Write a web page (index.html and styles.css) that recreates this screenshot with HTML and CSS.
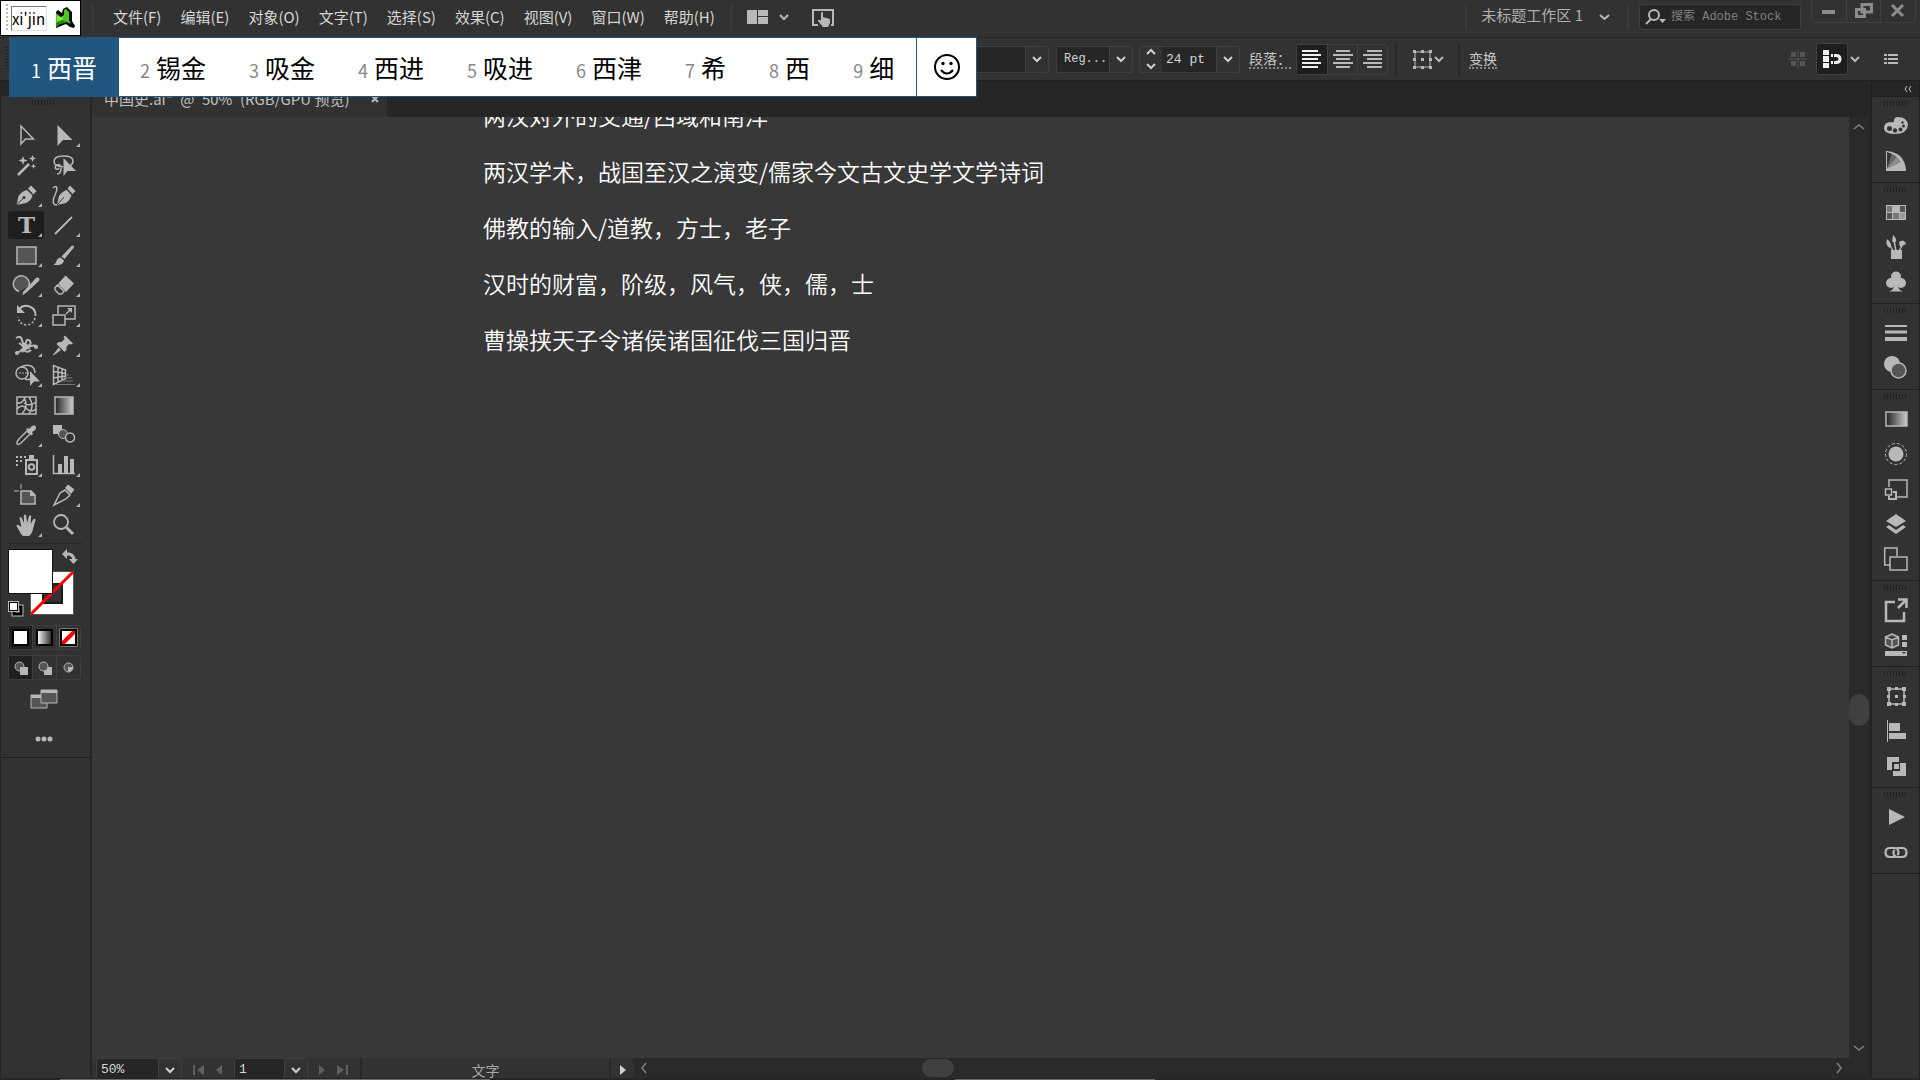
FILE: index.html
```html
<!DOCTYPE html>
<html lang="zh-CN">
<head>
    <meta charset="UTF-8">
    <meta name="viewport" content="width=device-width, initial-scale=1.0">
    <title>中国史.ai</title>
    <link rel="stylesheet" href="styles.css">
</head>
<body>
    <!-- menu bar -->
    <header class="menubar">
        <nav class="menus">
            <button>文件(F)</button>
            <button>编辑(E)</button>
            <button>对象(O)</button>
            <button>文字(T)</button>
            <button>选择(S)</button>
            <button>效果(C)</button>
            <button>视图(V)</button>
            <button>窗口(W)</button>
            <button>帮助(H)</button>
        </nav>
        <div class="menu-extra">
            <button class="arrange" aria-label="排列文档">
                <svg width="21" height="14" viewBox="0 0 21 14"><path class="f" d="M0 0h10v14H0zM11 0h10v6H11zM11 7h10v7H11z"/></svg>
                <svg width="10" height="6" viewBox="0 0 10 6"><path stroke-width="2" d="M1 1l4 4 4-4"/></svg>
            </button>
            <button class="touch" aria-label="触控工作区">
                <svg width="24" height="20" viewBox="0 0 24 20"><path stroke-width="2" d="M7 17H2V2h20v15h-2"/><path class="f" d="M10 4.500q1.200-1 2 0V9l7 2v4l-2 4h-5l-5-6q0-2 3-.5z"/></svg>
            </button>
        </div>
        <div class="menu-right">
            <button class="workspace">未标题工作区 1
                <svg width="11" height="7" viewBox="0 0 11 7"><path stroke-width="2" d="M1 1l4.500 4L10 1"/></svg>
            </button>
            <label class="search">
                <svg width="22" height="16" viewBox="0 0 22 16"><circle cx="9" cy="6" r="5" stroke-width="2"/><path stroke-width="2" d="M6 10l-5 5"/><path class="f" d="M14 10h7l-3.500 4z"/></svg>
                <input type="text" placeholder="搜索 Adobe Stock" aria-label="搜索">
            </label>
            <div class="window-buttons">
                <button aria-label="最小化"><svg width="14" height="14" viewBox="0 0 14 14"><path class="f" d="M0 6h13v4H0z"/></svg></button>
                <button aria-label="还原"><svg width="18" height="16" viewBox="0 0 18 16"><path stroke-width="3" d="M7 1.500h9.500V9H7zM1.500 6.500h8v7h-8z"/></svg></button>
                <button aria-label="关闭"><svg width="14" height="14" viewBox="0 0 14 14"><path stroke-width="3" d="M1 1l11 11M12 1L1 12"/></svg></button>
            </div>
        </div>
    </header>

    <!-- control bar -->
    <div class="controlbar">
        <span class="grip-v"></span>
        <div class="controls">
            <div class="combo font-name">
                <input type="text" aria-label="字体">
                <button aria-label="字体列表"><svg width="10" height="6" viewBox="0 0 10 6"><path stroke-width="2" d="M1 1l4 4 4-4"/></svg></button>
            </div>
            <div class="combo font-style">
                <input type="text" value="Reg..." aria-label="字体样式">
                <button aria-label="样式列表"><svg width="10" height="6" viewBox="0 0 10 6"><path stroke-width="2" d="M1 1l4 4 4-4"/></svg></button>
            </div>
            <div class="combo font-size">
                <button aria-label="调整字号"><svg width="10" height="20" viewBox="0 0 10 20"><path stroke-width="2" d="M1 5l4-4 4 4M1 15l4 4 4-4"/></svg></button>
                <input type="text" value="24 pt" aria-label="字号">
                <button aria-label="字号列表"><svg width="10" height="6" viewBox="0 0 10 6"><path stroke-width="2" d="M1 1l4 4 4-4"/></svg></button>
            </div>
            <a href="#" class="panel-link">段落：</a>
            <div class="align">
                <button class="on" aria-label="左对齐"><svg width="20" height="18" viewBox="0 0 20 18"><path stroke-width="2" d="M0 1h16M0 5h19M0 9h16M0 13h19M0 17h16"/></svg></button>
                <button aria-label="居中对齐"><svg width="20" height="18" viewBox="0 0 20 18"><path stroke-width="2" d="M3 1h14M0 5h20M3 9h14M0 13h20M3 17h14"/></svg></button>
                <button aria-label="右对齐"><svg width="20" height="18" viewBox="0 0 20 18"><path stroke-width="2" d="M4 1h15M0 5h19M4 9h15M0 13h19M4 17h15"/></svg></button>
            </div>
            <span class="divider"></span>
            <button class="reference" aria-label="对齐选项">
                <svg width="19" height="19" viewBox="0 0 19 19"><path d="M2 2h15v15H2z"/><path class="f" d="M0 0h3v3H0zM8 0h3v3H8zM16 0h3v3h-3zM0 8h3v3H0zM16 8h3v3h-3zM0 16h3v3H0zM8 16h3v3H8zM16 16h3v3h-3zM8 8h3v3H8z"/></svg>
                <svg width="10" height="6" viewBox="0 0 10 6"><path stroke-width="2" d="M1 1l4 4 4-4"/></svg>
            </button>
            <span class="divider"></span>
            <a href="#" class="panel-link">变换</a>
        </div>
        <div class="controls-right">
            <button class="dim" aria-label="对齐像素网格"><svg width="18" height="18" viewBox="0 0 18 18"><path d="M9 0v18M0 9h18"/><path class="f" d="M2 2h5v5H2zM11 2h5v5h-5zM2 11h5v5H2zM11 11h5v5h-5z"/></svg></button>
            <button class="snap" aria-label="贴紧像素"><svg width="20" height="18" viewBox="0 0 20 18"><path class="f" d="M1 0h6v18H1z"/><path class="cut" d="M1 5.500h6M1 12.500h6"/><path stroke-width="3" d="M9 5.500h5q4 0 4 3.500t-4 3.500H9"/><path class="cut" d="M11.500 3v12"/></svg></button>
            <button aria-label="更多对齐"><svg width="10" height="6" viewBox="0 0 10 6"><path stroke-width="2" d="M1 1l4 4 4-4"/></svg></button>
            <button class="list" aria-label="面板菜单"><svg width="14" height="12" viewBox="0 0 14 12"><path stroke-width="2" d="M0 2h3M4 2h10M0 6h3M4 6h10M0 10h3M4 10h10"/></svg></button>
        </div>
    </div>

    <main class="workspace-area">
        <!-- tools -->
        <aside class="toolbox">
            <span class="grip"></span>
            <div class="tools">
                <button aria-label="选择工具"><svg viewBox="0 0 24 24"><path stroke-width="1.500" d="M7 3v18l4.500-5h8z"/></svg></button>
                <button class="more" aria-label="直接选择工具"><svg viewBox="0 0 24 24"><path class="f" d="M5.500 2v21l5.500-6h9.500z"/></svg></button>
                <button aria-label="魔棒工具"><svg viewBox="0 0 24 24"><path stroke-width="2.500" d="M4 22L15 11"/><path class="f" d="M9 3l1.200 3.300L13.500 7.500l-3.300 1.200L9 12 7.800 8.700 4.500 7.500l3.300-1.200zM18.500 2l1 2.500L22 5.500l-2.500 1-1 2.500-1-2.500-2.500-1 2.500-1zM19.500 10.500l.8 1.900 2 .8-2 .8-.8 2-.8-2-2-.8 2-.8z"/></svg></button>
                <button aria-label="套索工具"><svg viewBox="0 0 24 24"><path stroke-width="1.500" d="M11 14Q2 13 2 8.500 2 3 11.500 3 21 3 21 8q0 3-3 5"/><path stroke-width="1.500" d="M9 14q-1-3-4-2-3 2-1 4 2 1 3-1M5 21q4 0 4-6"/><path class="f" d="M11.500 5v18l4-5H24z"/></svg></button>
                <button class="more" aria-label="钢笔工具"><svg viewBox="0 0 24 24"><path class="f" d="M2.500 22l2-9Q8 8 13 7l5.500 5.500Q17 18 12 20zM14 5.500L17 2.500l5.500 5.500-3 3.500z"/><path class="cut" d="M2.500 22l7-7"/><circle class="cutf" cx="10" cy="14.500" r="1.500"/></svg></button>
                <button aria-label="曲率工具"><svg viewBox="0 0 24 24"><path stroke-width="1.500" d="M1 5q3-3 4 0 0 3-2 7-3 6-1 9 2 2 4 0"/><path class="f" d="M5 22l2-9q3.500-5 8-6l4.500 5.500Q18 17 14 20zM15.500 5.500L18 2.500l5.500 5.500-3 3z"/><path class="cut" d="M5 22l7-8"/></svg></button>
                <button class="more on" aria-label="文字工具"><svg viewBox="0 0 24 24"><text x="12.500" y="20" text-anchor="middle">T</text></svg></button>
                <button class="more" aria-label="直线段工具"><svg viewBox="0 0 24 24"><path stroke-width="1.800" d="M3 21L20 4"/></svg></button>
                <button class="more" aria-label="矩形工具"><svg viewBox="0 0 24 24"><path class="mid" stroke-width="1.500" d="M3 4h19v17H3z"/></svg></button>
                <button class="more" aria-label="画笔工具"><svg viewBox="0 0 24 24"><path class="f" d="M21.500 2.500q1 1 0 2.500l-9 11-3-2.500 10-10.500zM8.500 14.500l3.500 3q-1 4-5 4.500H1.500q2.500-1.500 3-4t4-3.500z"/></svg></button>
                <button class="more" aria-label="Shaper 工具"><svg viewBox="0 0 24 24"><path class="mid" stroke-width="1.500" d="M5 18.500A8 8 0 1 1 15 13"/><path class="f" d="M22 5q2-1 3 0t0 3L13 19l-4 3q-1 0 0-3z"/></svg></button>
                <button class="more" aria-label="橡皮擦工具"><svg viewBox="0 0 24 24"><path class="f" d="M13.500 2.500l8.500 8-8 8.500-8-8z"/><path stroke-width="1.500" d="M5.500 12l6.500 6.500-2.500 2.500H7l-4-4v-2.500z"/></svg></button>
                <button class="more" aria-label="旋转工具"><svg viewBox="0 0 24 24"><path stroke-width="2" d="M5 6q4-4 9-3 8 2 7.500 10"/><path stroke-width="1.500" stroke-dasharray="2 2" d="M21 15q-2 7-9 7-7-1-8-8"/><path class="f" d="M3 2v8h8z"/></svg></button>
                <button class="more" aria-label="比例缩放工具"><svg viewBox="0 0 24 24"><path stroke-width="1.500" d="M6 11V3h17v13H13M1 12h12v10H1zM14 11l5-5"/><path class="f" d="M15 5h5v5z"/></svg></button>
                <button class="more" aria-label="宽度工具"><svg viewBox="0 0 24 24"><path stroke-width="2" d="M2 5q5-3 6 2 1 6 5 6 5-1 3-5-3-3-4 1-3 10-10 11M8 19q8-8 15-6M5 10q5 3 6 8 3 2 6-1"/><circle class="f" cx="3" cy="20" r="2"/><circle class="f" cx="22" cy="14" r="2"/><path class="f" d="M8 9l5 2 3 5-6 1z"/></svg></button>
                <button aria-label="操控变形工具" class="more"><svg viewBox="0 0 24 24"><path class="f" d="M13 2.500l8 8-2 1-2-.5-2.500 3 0 3-2 2-8-8 2-2h3l3-3-1-2zM6.500 14.500l2.500 2.500L1.500 22.500 1 22z"/></svg></button>
                <button class="more" aria-label="形状生成器工具"><svg viewBox="0 0 24 24"><circle stroke-width="1.500" cx="8" cy="10" r="6"/><path stroke-width="1.500" d="M7 4q5-3 10-1 4 2 4 7M11 16q3 1 6 0"/><path stroke-dasharray="2 1" d="M5 10h10"/><path class="f" d="M16 8v15l4-4.500h6z"/></svg></button>
                <button class="more" aria-label="透视网格工具"><svg viewBox="0 0 24 24"><path stroke-width="1.500" d="M1.500 2.500v19l12-6V7zM6 4v15M10 6v11M1.500 8.500l12 2M1.500 15l12-2"/><path class="soft" d="M14 12h3M13 15h7M9 18h12M4 21.500h19"/></svg></button>
                <button aria-label="网格工具"><svg viewBox="0 0 24 24"><path stroke-width="1.500" d="M3 4h19v17H3zM3 10q6 1 8-6M3 16q5-6 10 0 4 4 9 0M8 21q7-8 2-17M15 21q6-8 0-17M10 10q6 4 12-1"/></svg></button>
                <button aria-label="渐变工具"><svg viewBox="0 0 24 24"><defs><linearGradient id="fade"><stop stop-color="#222"/><stop offset="1" stop-color="#ccc"/></linearGradient></defs><path class="fade" stroke-width="1.500" d="M3 4h18v17H3z"/></svg></button>
                <button class="more" aria-label="吸管工具"><svg viewBox="0 0 24 24"><path stroke-width="1.500" d="M13 8l3 3-9 9q-4 3-4 0 0-2 2-4z"/><path class="f" d="M12 6l2-1 1 1 3-3q4-2 4 2 0 2-4 4l1 2-1.500 1.500z"/></svg></button>
                <button aria-label="混合工具"><svg viewBox="0 0 24 24"><path class="f" d="M1 2h9v9H1z"/><circle class="mid" cx="11" cy="11" r="4.500"/><circle class="hole" stroke-width="1.500" cx="18" cy="14.500" r="4.500"/></svg></button>
                <button class="more" aria-label="符号喷枪工具"><svg viewBox="0 0 24 24"><path class="f" d="M15 2h5v4h-5zM2 3h2v2H2zM6 3h2v2H6zM10 3h2v2h-2zM2 7h2v2H2zM6 7h2v2H6zM2 11h2v2H2z"/><path stroke-width="2" d="M12 7h11v14H12z"/><circle stroke-width="2" cx="17.500" cy="14" r="2.800"/></svg></button>
                <button class="more" aria-label="柱形图工具"><svg viewBox="0 0 24 24"><path stroke-width="1.500" d="M1.500 2v18.500H23"/><path class="f" d="M6 11h4v10H6zM12 3h4v18h-4zM18 6h4v15h-4z"/></svg></button>
                <button aria-label="画板工具"><svg viewBox="0 0 24 24"><path class="mid" stroke-width="1.500" d="M7 8h10l4 4v9H7z"/><path class="f" d="M16 7l6 6h-6z"/><path d="M0 8h5M7 1v5"/></svg></button>
                <button class="more" aria-label="切片工具"><svg viewBox="0 0 24 24"><path stroke-width="1.500" d="M2 22l6-12 5-3 5 5-4 4z"/><path class="f" d="M13 5l3-3.500 6.500 5L19 11z"/></svg></button>
                <button class="more" aria-label="抓手工具"><svg viewBox="0 0 24 24"><path class="f" d="M7 21L2.500 13q0-2 2-1l3 2L5.500 5q1-2 2.200 0L10 10 9.800 2.500q1.200-2 2.400 0L13 10l2-7q1.500-1.500 2.200 0L16.500 11l3-5q2-1 2 1L19 16q-1 5-4 7H9z"/></svg></button>
                <button aria-label="缩放工具"><svg viewBox="0 0 24 24"><circle stroke-width="1.800" cx="9" cy="9" r="7"/><path stroke-width="3" d="M14.500 14.500L21 21"/></svg></button>
            </div>
            <button class="fillstroke" aria-label="填色和描边">
                <svg width="75" height="70" viewBox="0 0 75 70">
                    <rect x="22.500" y="22.500" width="43" height="43" fill="#fff" stroke="#555"/>
                    <rect x="35" y="35" width="19" height="19" fill="#323232" stroke="#1a1a1a" stroke-width="2"/>
                    <path stroke="#f00" stroke-width="3" d="M23 65L65 23"/>
                    <rect x=".5" y=".5" width="44" height="44" fill="#fff" stroke="#111"/>
                    <path stroke-width="3" d="M58 5h3q5 1 5 7"/>
                    <path class="f" d="M59 0v10l-5-5zM61 10h9l-4.500 5z"/>
                    <rect x="6" y="58" width="7" height="7" stroke="#bbb" stroke-width="5"/>
                    <rect x="6" y="58" width="7" height="7" stroke="#000" stroke-width="3"/>
                    <rect x=".5" y="52.500" width="10" height="10" fill="#000" stroke="#bbb"/>
                    <rect x="2.500" y="54.500" width="6" height="6" fill="#fff" stroke="#fff"/>
                </svg>
            </button>
            <div class="modes">
                <button class="on" aria-label="颜色"><svg width="17" height="17" viewBox="0 0 17 17"><rect class="sw" fill="#fff" x="1" y="1" width="15" height="15"/></svg></button>
                <button aria-label="渐变"><svg width="17" height="17" viewBox="0 0 17 17"><defs><linearGradient id="paper"><stop stop-color="#fff"/><stop offset="1" stop-color="#2a2222"/></linearGradient></defs><rect class="sw" fill="url(#paper)" x="1" y="1" width="15" height="15"/></svg></button>
                <button aria-label="无"><svg width="17" height="17" viewBox="0 0 17 17"><rect fill="#fff" width="17" height="17"/><path stroke="#f00" stroke-width="4" d="M1 16L16 1"/><rect class="sw" x="1" y="1" width="15" height="15"/></svg></button>
            </div>
            <div class="modes">
                <button class="on" aria-label="正常绘图"><svg width="14" height="14" viewBox="0 0 14 14"><circle class="mid" cx="5.500" cy="5.500" r="4.500"/><path class="f" d="M6 6h8v8H6z"/></svg></button>
                <button aria-label="背面绘图"><svg width="14" height="14" viewBox="0 0 14 14"><path class="f" d="M6 6h8v8H6z"/><circle class="mid" cx="5.500" cy="5.500" r="4.500"/></svg></button>
                <button aria-label="内部绘图"><svg width="14" height="14" viewBox="0 0 14 14"><circle class="mid" cx="6.500" cy="6.500" r="4.500"/><path class="f" d="M6 6h5q0 4-5 5z"/></svg></button>
            </div>
            <button class="screen-mode" aria-label="更改屏幕模式"><svg width="28" height="20" viewBox="0 0 28 20"><path class="mid" d="M1 6h16v13H1z"/><path class="mid" d="M11 1h16v13H11z"/><path class="f" d="M11 1h16v3H11zM1 6h10v3H1z"/></svg></button>
            <button class="edit-tools" aria-label="编辑工具栏"><svg width="18" height="6" viewBox="0 0 18 6"><circle class="f" cx="3" cy="3" r="2.500"/><circle class="f" cx="9" cy="3" r="2.500"/><circle class="f" cx="15" cy="3" r="2.500"/></svg></button>
        </aside>

        <!-- document window -->
        <section class="document">
            <div class="tabs">
                <div class="tab">
                    <span class="tab-title">中国史.ai*&ensp;@&ensp;50%&ensp;(RGB/GPU 预览)</span>
                    <button aria-label="关闭文档"><svg width="8" height="8" viewBox="0 0 8 8"><path stroke-width="2" d="M1 1l6 6M7 1L1 7"/></svg></button>
                </div>
            </div>
            <div class="view">
                <article class="canvas">
                    <p>两汉对外的交通/西域和南洋</p>
                    <p>两汉学术，战国至汉之演变/儒家今文古文史学文学诗词</p>
                    <p>佛教的输入/道教，方士，老子</p>
                    <p>汉时的财富，阶级，风气，侠，儒，士</p>
                    <p>曹操挟天子令诸侯诸国征伐三国归晋</p>
                </article>
                <div class="scroll-v">
                    <button aria-label="向上滚动"><svg width="10" height="6" viewBox="0 0 10 6"><path stroke-width="1.500" d="M0 5l5-4 5 4"/></svg></button>
                    <span class="before"></span>
                    <span class="thumb"></span>
                    <span class="after"></span>
                    <button aria-label="向下滚动"><svg width="10" height="6" viewBox="0 0 10 6"><path stroke-width="1.500" d="M0 1l5 4 5-4"/></svg></button>
                </div>
            </div>
            <footer class="statusbar">
                <div class="combo zoom">
                    <input type="text" value="50%" aria-label="缩放">
                    <button aria-label="缩放列表"><svg width="10" height="6" viewBox="0 0 10 6"><path stroke-width="2" d="M1 1l4 4 4-4"/></svg></button>
                </div>
                <div class="pager">
                    <button aria-label="首项"><svg width="11" height="10" viewBox="0 0 11 10"><path class="f" d="M0 0h2v10H0zM11 0v10L4 5z"/></svg></button>
                    <button aria-label="上一项"><svg width="6" height="10" viewBox="0 0 6 10"><path class="f" d="M6 0v10L0 5z"/></svg></button>
                </div>
                <div class="combo artboard">
                    <input type="text" value="1" aria-label="画板">
                    <button aria-label="画板列表"><svg width="10" height="6" viewBox="0 0 10 6"><path stroke-width="2" d="M1 1l4 4 4-4"/></svg></button>
                </div>
                <div class="pager">
                    <button aria-label="下一项"><svg width="6" height="10" viewBox="0 0 6 10"><path class="f" d="M0 0v10l6-5z"/></svg></button>
                    <button aria-label="末项"><svg width="11" height="10" viewBox="0 0 11 10"><path class="f" d="M9 0h2v10H9zM0 0v10l7-5z"/></svg></button>
                </div>
                <span class="status-text">文字</span>
                <button class="status-menu" aria-label="状态栏选项"><svg width="6" height="10" viewBox="0 0 6 10"><path class="f" d="M0 0v10l6-5z"/></svg></button>
                <div class="scroll-h">
                    <button aria-label="向左滚动"><svg width="6" height="10" viewBox="0 0 6 10"><path stroke-width="1.500" d="M5 0L1 5l4 5"/></svg></button>
                    <span class="before"></span>
                    <span class="thumb"></span>
                    <span class="after"></span>
                    <button aria-label="向右滚动"><svg width="6" height="10" viewBox="0 0 6 10"><path stroke-width="1.500" d="M1 0l4 5-4 5"/></svg></button>
                </div>
            </footer>
        </section>

        <!-- panel dock -->
        <aside class="dock">
            <button class="dock-head" aria-label="展开面板"><svg width="8" height="6" viewBox="0 0 8 6"><path d="M3 0L1 3l2 3M7 0L5 3l2 3"/></svg></button>
            <div class="group">
                <span class="grip"></span>
                <button aria-label="颜色"><svg viewBox="0 0 24 24"><path class="f" d="M14 3q9 0 10 8-1 9-13 9Q0 20 0 14t7-6q3 1 3-1 0-4 4-4z"/><g class="cutf"><circle cx="5.500" cy="14.500" r="2.500"/><circle cx="11" cy="16.500" r="2.200"/><circle cx="16.500" cy="15.500" r="2"/><circle cx="19.500" cy="12" r="1.500"/><circle cx="18.500" cy="8.500" r="1.200"/></g></svg></button>
                <button aria-label="颜色参考"><svg viewBox="0 0 24 24"><path class="f" d="M2 2q19 1 20 20H2z"/><path fill="#333" stroke="none" d="M3 3v17L8 5z"/><path fill="#666" stroke="none" d="M3 20L8 5l5 3z"/><path fill="#8c8c8c" stroke="none" d="M3 20L13 8l4 5z"/></svg></button>
            </div>
            <div class="group">
                <span class="grip"></span>
                <button aria-label="色板"><svg viewBox="0 0 24 24"><path class="f" d="M2 5h20v15H2z"/><g stroke="none"><path fill="#777" d="M3 6h5v6H3zM9 13h6v6H9z"/><path fill="#555" d="M16 6h5v6h-5zM3 13h5v6H3z"/><path fill="#999" d="M16 13h5v6h-5z"/></g></svg></button>
                <button aria-label="画笔"><svg viewBox="0 0 24 24"><path class="f" d="M7 15h11v9H7zM9 0q4 3 3 6l-1 2-3-2zM3 4q3 2 4 5l-1 4q-5-2-3-9zM15 7q5-4 7 2l-6 3z"/><path stroke-width="1.500" d="M10 6l2 10M6 10l3 6M19 9l-4 7"/></svg></button>
                <button aria-label="符号"><svg viewBox="0 0 24 24"><g class="f"><circle cx="12" cy="6.500" r="5"/><circle cx="7" cy="13" r="5"/><circle cx="17" cy="13" r="5"/><path d="M10 9h4v6q0 5 5 6.500H5q5-1.500 5-6.500z"/></g></svg></button>
            </div>
            <div class="group">
                <span class="grip"></span>
                <button aria-label="描边"><svg viewBox="0 0 24 24"><path stroke-width="2" d="M1 5h22"/><path stroke-width="3" d="M1 11h22"/><path stroke-width="4" d="M1 18h22"/></svg></button>
                <button aria-label="透明度"><svg viewBox="0 0 24 24"><circle class="f" cx="8" cy="8" r="8"/><circle class="mid" stroke-width="1.500" cx="14.500" cy="14.500" r="7.500"/></svg></button>
            </div>
            <div class="group">
                <span class="grip"></span>
                <button aria-label="渐变"><svg viewBox="0 0 24 24"><path class="fade" stroke-width="1.500" d="M2 5h21v14H2z"/></svg></button>
                <button aria-label="外观"><svg viewBox="0 0 24 24"><circle class="f" cx="12" cy="12" r="7.500"/><circle stroke-dasharray="3 2" cx="12" cy="12" r="10.500"/></svg></button>
                <button aria-label="资源导出"><svg viewBox="0 0 24 24"><path stroke-width="1.500" d="M5 10V3h18v17H12M1.500 12h6v6h-6z"/><path stroke-width="2" d="M5 19v3h7v-7H9"/></svg></button>
                <button aria-label="图层"><svg viewBox="0 0 24 24"><path class="f" d="M12 2l10 7-10 6L2 9zM5 13l7 5 7-5 3 2-10 7-10-7z"/></svg></button>
                <button aria-label="画板"><svg viewBox="0 0 24 24"><path stroke-width="1.500" d="M6 18H0.700V1H13v8M6 10h17v13H6z"/></svg></button>
            </div>
            <div class="group">
                <span class="grip"></span>
                <button aria-label="导出"><svg viewBox="0 0 24 24"><path stroke-width="2.500" d="M11 4H2v19h18v-9M14 10l8-8"/><path stroke-width="2.500" d="M14 1.500h8.500V10"/></svg></button>
                <button aria-label="库"><svg viewBox="0 0 24 24"><path class="mid" stroke-width="1.500" d="M8 1l6.500 3v8L8 15l-6.500-3V4zM1.500 4L8 7l6.500-3M8 7v8"/><path class="f" d="M18 2h5v5h-5zM18 9h5v5h-5zM1 18h22v5H1z"/><path class="cutf" d="M18 19h4l-2 2z"/></svg></button>
            </div>
            <div class="group">
                <span class="grip"></span>
                <button aria-label="变换"><svg viewBox="0 0 24 24"><path stroke-width="1.500" d="M5 5h15v15H5z"/><path class="f" d="M3 3h4v4H3zM11 3h3v3h-3zM18 3h4v4h-4zM3 11h3v3H3zM19 11h3v3h-3zM3 18h4v4H3zM11 19h3v3h-3zM18 18h4v4h-4zM11 11h3v3h-3z"/></svg></button>
                <button aria-label="对齐"><svg viewBox="0 0 24 24"><path d="M3.500 1v22"/><path class="f" d="M5 4h11v8H5zM5 14h17v6H5z"/></svg></button>
                <button aria-label="路径查找器"><svg viewBox="0 0 24 24"><path class="f" d="M3 3h12v5H8v8H3zM16 9h6v13H9v-5h7z"/><path class="f" d="M10 10h5v5h-5z"/></svg></button>
            </div>
            <div class="group">
                <span class="grip"></span>
                <button aria-label="动作"><svg viewBox="0 0 24 24"><path class="f" d="M5 4l16 8-16 8z"/></svg></button>
                <button aria-label="链接"><svg viewBox="0 0 24 24"><path stroke-width="2.200" d="M11 17H6q-4.500 0-4.500-4.500T6 8h4q4.500 0 4.500 4.500 0 1.500-1 2.500M13 8h5q4.500 0 4.500 4.500T18 17h-4q-4.500 0-4.500-4.500 0-1.500 1-2.500"/></svg></button>
            </div>
        </aside>
    </main>
    <div class="edge"><span></span><span></span></div>

    <!-- input method windows float over the application -->
    <div class="ime-input">
        <span class="dots"></span>
        <input type="text" value="xi'jin" aria-label="拼音">
        <svg width="20" height="22" viewBox="0 0 20 22"><path fill="#000" d="M1 5l2-2 4 3 1-4 4-2 5 5v9l3 5-1 2-4-1-4-3-10 4z"/><path fill="#4cc520" d="M1 6l5 4 3-2V3l2-1 3 3v8l2 4-4-2-7 2-4 3z"/><path fill="#8be35c" d="M2 8l4 3 3-2-2 4-5 1z"/><path fill="#168a10" d="M1 16l7-3 4 2-7 2-4 3z"/></svg>
    </div>
    <div class="ime-list">
        <button class="on"><i>1</i>西晋</button>
        <button><i>2</i>锡金</button>
        <button><i>3</i>吸金</button>
        <button><i>4</i>西进</button>
        <button><i>5</i>吸进</button>
        <button><i>6</i>西津</button>
        <button><i>7</i>希</button>
        <button><i>8</i>西</button>
        <button><i>9</i>细</button>
        <button class="emoji" aria-label="表情"><svg width="26" height="26" viewBox="0 0 26 26"><circle cx="13" cy="13" r="12"/><path d="M7 16q6 7 12 0"/><circle class="eye" cx="9" cy="9.500" r="1.700"/><circle class="eye" cx="17" cy="9.500" r="1.700"/></svg></button>
    </div>
</body>
</html>
```
FILE: styles.css
```css
* {
    box-sizing: border-box;
}
body {
    margin: 0;
    height: 100vh;
    display: flex;
    flex-direction: column;
    overflow: hidden;
    background: #323232;
    color: #d6d6d6;
    font-family: "Noto Sans CJK SC", sans-serif;
    font-size: 15px;
}
button, input {
    font: inherit;
    color: inherit;
    background: none;
    border: none;
    padding: 0;
    margin: 0;
}
button {
    display: flex;
    align-items: center;
    justify-content: center;
    cursor: pointer;
}
input {
    min-width: 0;
    outline: none;
}
svg {
    display: block;
    flex: none;
    overflow: visible;
    fill: none;
    stroke: #b8b8b8;
}
svg .f { fill: #b8b8b8; stroke: none; }
svg .mid { fill: #555; }
svg .hole { fill: #323232; }
svg .soft { stroke: #777; }
svg .cut { stroke: #323232; }
svg .cutf { fill: #323232; stroke: none; }
svg .fade { fill: url(#fade); }
svg .sw { stroke: #000; stroke-width: 2; }

/* menu bar */
.menubar {
    height: 38px;
    flex: none;
    display: flex;
    border-bottom: 1px solid #262626;
}
.menus {
    display: flex;
    gap: 19px;
    height: 25px;
    margin: 5px 0 0 92px;
    padding: 0 0 2px 19px;
    border-left: 2px solid #3a3a3a;
}
.menu-extra {
    display: flex;
    gap: 22px;
    height: 25px;
    margin: 5px 0 0 15px;
    padding-left: 15px;
    border-left: 2px solid #3a3a3a;
}
.arrange { gap: 11px; padding-bottom: 2px; }
.menu-right {
    display: flex;
    margin-left: auto;
}
.workspace {
    gap: 16px;
    height: 25px;
    margin-top: 5px;
    padding: 0 17px 6px 14px;
    border-left: 2px solid #3a3a3a;
    border-right: 2px solid #3a3a3a;
    color: #b0b0b0;
}
.workspace svg { margin-top: 6px; }
.search {
    display: flex;
    align-items: center;
    gap: 4px;
    width: 162px;
    height: 26px;
    margin: 4px 10px 0;
    padding: 0 5px;
    background: #262626;
    border: 1px solid #404040;
    border-radius: 3px;
    font: 12px "Liberation Mono", "Noto Sans CJK SC", monospace;
}
.search input { flex: 1; }
.search input::placeholder { color: #808080; opacity: 1; }
.window-buttons {
    display: flex;
    height: 23px;
    width: 105px;
    margin-right: 4px;
    border: 1px solid #404040;
    border-top: none;
    border-radius: 0 0 5px 5px;
}
.window-buttons button { flex: 1; }
.window-buttons button + button { border-left: 1px solid #404040; }
.window-buttons svg { stroke: #8c8c8c; }
.window-buttons .f { fill: #8c8c8c; }

/* control bar */
.controlbar {
    height: 43px;
    flex: none;
    display: flex;
    align-items: center;
    border-bottom: 1px solid #202020;
}
.grip-v {
    width: 4px;
    height: 24px;
    margin-left: 5px;
    background: repeating-linear-gradient(#222 0 1px, transparent 1px 3px);
}
.controls {
    display: flex;
    align-items: center;
    margin-left: 760px;
}
.combo {
    display: flex;
    height: 27px;
    border: 1px solid #404040;
    border-radius: 3px;
    font: 12px "Liberation Mono", monospace;
}
.combo input {
    flex: 1;
    background: #262626;
}
.combo button { width: 23px; }
.combo input + button { border-left: 1px solid #404040; }
.combo svg { stroke: #d0d0d0; }
.font-name { width: 280px; margin-right: 7px; }
.font-style { width: 77px; margin-right: 6px; }
.font-style input { padding-left: 7px; }
.font-size { width: 101px; font-size: 13px; }
.font-size input { padding-left: 4px; }
.font-size button:first-child { width: 22px; }
.panel-link {
    margin-left: 9px;
    color: #c8c8c8;
    font-size: 14px;
    line-height: 17px;
    text-decoration: none;
    border-bottom: 2px dotted #888;
}
.align {
    display: flex;
    height: 31px;
    margin: 0 7px 0 5px;
    border: 1px solid #404040;
    border-radius: 3px;
}
.align button { width: 30px; }
.align button + button { border-left: 1px solid #404040; }
.align .on { background: #1e1e1e; }
.align .on svg { stroke: #f0f0f0; }
.divider {
    width: 2px;
    height: 32px;
    background: #282828;
}
.reference { gap: 2px; margin: 0 14px 0 16px; }
.controls-right {
    display: flex;
    align-items: center;
    margin: 0 22px 0 auto;
}
.dim svg { stroke: #555; }
.dim .f { fill: #555; }
.snap {
    width: 32px;
    height: 32px;
    margin: 0 2px 0 9px;
    background: #1e1e1e;
    border: 1px solid #404040;
    border-radius: 3px;
}
.snap svg { stroke: #f0f0f0; }
.snap .f { fill: #f0f0f0; }
.snap .cut { stroke: #1e1e1e; }
.list { margin-left: 24px; }

.workspace-area {
    flex: 1;
    min-height: 0;
    display: flex;
    background: #262626;
}
.grip {
    width: 24px;
    height: 5px;
    background: repeating-linear-gradient(90deg, #202020 0 1px, transparent 1px 3px);
}

/* tools */
.toolbox {
    width: 90px;
    flex: none;
    display: flex;
    flex-direction: column;
    margin: 15px 2px 0 0;
    padding-left: 7px;
    background: #323232;
    border-left: 1px solid #262626;
}
.toolbox .grip { margin: 4px 0 0 24px; }
.tools {
    display: grid;
    grid-template-columns: 36px 36px;
    grid-auto-rows: 28px;
    gap: 2px;
    margin: 16px 8px 5px 0;
    padding-bottom: 4px;
    border-bottom: 1px solid #282828;
}
.tools button {
    position: relative;
    border-radius: 3px;
}
.tools svg { width: 24px; height: 24px; }
.tools .on { background: #1e1e1e; }
.tools text {
    fill: #b8b8b8;
    stroke: none;
    font: bold 23px "DejaVu Serif", serif;
}
.more::after {
    content: "";
    position: absolute;
    right: 2px;
    bottom: 2px;
    border: 2px solid transparent;
    border-right-color: #b0b0b0;
    border-bottom-color: #b0b0b0;
}
.fillstroke { align-self: flex-start; }
.modes {
    display: flex;
    width: 73px;
    height: 25px;
    margin-top: 6px;
    border: 1px solid #3e3e3e;
    border-radius: 3px;
}
.modes + .modes { margin-top: 5px; }
.modes button { flex: 1; }
.modes button + button { border-left: 1px solid #3e3e3e; }
.modes .on { background: #202020; }
.screen-mode { margin: 9px 10px 0 0; }
.edit-tools { margin: 27px 10px 0 0; padding-bottom: 15px; }
.toolbox::after {
    content: "";
    flex: 1;
    margin-left: -7px;
    border-top: 1px solid #202020;
}

/* document */
.document {
    flex: 1;
    min-width: 0;
    display: flex;
    flex-direction: column;
}
.tabs {
    height: 36px;
    flex: none;
    display: flex;
}
.tab {
    display: flex;
    align-items: center;
    gap: 22px;
    padding: 0 8px 0 12px;
    background: #323232;
    color: #c0c0c0;
}
.tab-title { line-height: 20px; white-space: nowrap; }
.view {
    flex: 1;
    min-height: 0;
    display: flex;
}
.canvas {
    flex: 1;
    min-width: 0;
    overflow: hidden;
    background: #383838;
}
.canvas p {
    margin: 0 0 0 391px;
    color: #fff;
    font-size: 23px;
    font-weight: 350;
    line-height: 56px;
}
.canvas p:first-child { margin-top: -30px; }
.scroll-v {
    width: 20px;
    flex: none;
    display: flex;
    flex-direction: column;
    align-items: center;
    background: #2a2a2a;
}
.scroll-v button, .scroll-h button { width: 20px; height: 20px; }
.scroll-v .thumb {
    width: 20px;
    height: 32px;
    border-radius: 10px;
    background: #404040;
}
.scroll-v .before { flex: 557; }
.scroll-v .after { flex: 312; }

/* status bar */
.statusbar {
    height: 20px;
    flex: none;
    display: flex;
    align-items: stretch;
    padding-left: 4px;
    background: #323232;
}
.statusbar .combo {
    height: 23px;
    font-size: 13px;
}
.zoom { width: 86px; }
.artboard { width: 74px; }
.zoom input, .artboard input { padding-left: 4px; }
.pager {
    display: flex;
    align-items: center;
    justify-content: space-between;
    width: 52px;
    padding: 4px 12px 0 11px;
}
.pager .f { fill: #606060; }
.status-text {
    width: 251px;
    border: 1px solid #282828;
    border-width: 0 2px;
    text-align: center;
    line-height: 24px;
    font-size: 14px;
    color: #a8a8a8;
}
.status-menu { width: 23px; padding-top: 4px; }
.status-menu .f { fill: #d0d0d0; }
.scroll-h {
    flex: 1;
    display: flex;
    align-items: center;
    padding-right: 20px;
    background: #2a2a2a;
}
.scroll-h .thumb {
    width: 32px;
    height: 18px;
    border-radius: 9px;
    background: #404040;
}
.scroll-h .before { flex: 268; }
.scroll-h .after { flex: 876; }
.scroll-v svg, .scroll-h svg { stroke: #808080; }

/* panel dock */
.dock {
    width: 49px;
    flex: none;
    margin-left: 2px;
    background: #323232;
    border-left: 1px solid #202020;
    border-right: 1px solid #202020;
}
.dock-head {
    width: 100%;
    height: 15px;
    padding-left: 24px;
    background: #262626;
}
.group {
    display: flex;
    flex-direction: column;
    align-items: center;
    padding-bottom: 4px;
    border-top: 1px solid #202020;
}
.group .grip { margin: 4px 0 2px; }
.group button { width: 36px; height: 35px; }
.group svg { width: 24px; height: 24px; }
.group:last-child { border-bottom: 1px solid #202020; }

/* top edge of whatever lies below the window */
.edge {
    height: 2px;
    flex: none;
    display: flex;
    background: #262626;
}
.edge span {
    width: 430px;
    margin-left: 60px;
    border-bottom: 1px solid #6a6a6a;
}
.edge span + span { width: 200px; margin-left: 465px; }

/* input method */
.ime-input {
    position: absolute;
    left: 0;
    top: 0;
    display: flex;
    align-items: center;
    width: 81px;
    height: 36px;
    padding: 0 5px;
    background: #fff;
    border: 1px solid #000;
}
.dots {
    width: 2px;
    height: 28px;
    margin-right: 3px;
    background: repeating-linear-gradient(#bbb 0 2px, transparent 2px 4px);
}
.ime-input input {
    width: 38px;
    height: 25px;
    margin-right: 8px;
    color: #000;
    border: 1px solid #e0e0e0;
    border-top-color: #777;
    border-left-color: #777;
    font-size: 15px;
}
.ime-input svg { stroke: none; }
.ime-list {
    position: absolute;
    left: 9px;
    top: 37px;
    display: flex;
    height: 60px;
    background: #fff;
    border: 1px solid #22567e;
    color: #000;
    font-size: 25px;
}
.ime-list button {
    align-items: baseline;
    gap: 6px;
    padding: 0 22px 0 21px;
    line-height: 58px;
}
.ime-list i {
    width: 10px;
    color: #888;
    font-size: 18px;
    font-style: normal;
}
.ime-list .on { background: #22567e; }
.ime-list .on, .ime-list .on i { color: #fff; }
.ime-list .emoji {
    align-items: center;
    width: 60px;
    padding: 0;
    border-left: 1px solid #22567e;
}
.emoji svg { stroke: #000; stroke-width: 2; }
.emoji .eye { fill: #000; stroke: none; }
```
